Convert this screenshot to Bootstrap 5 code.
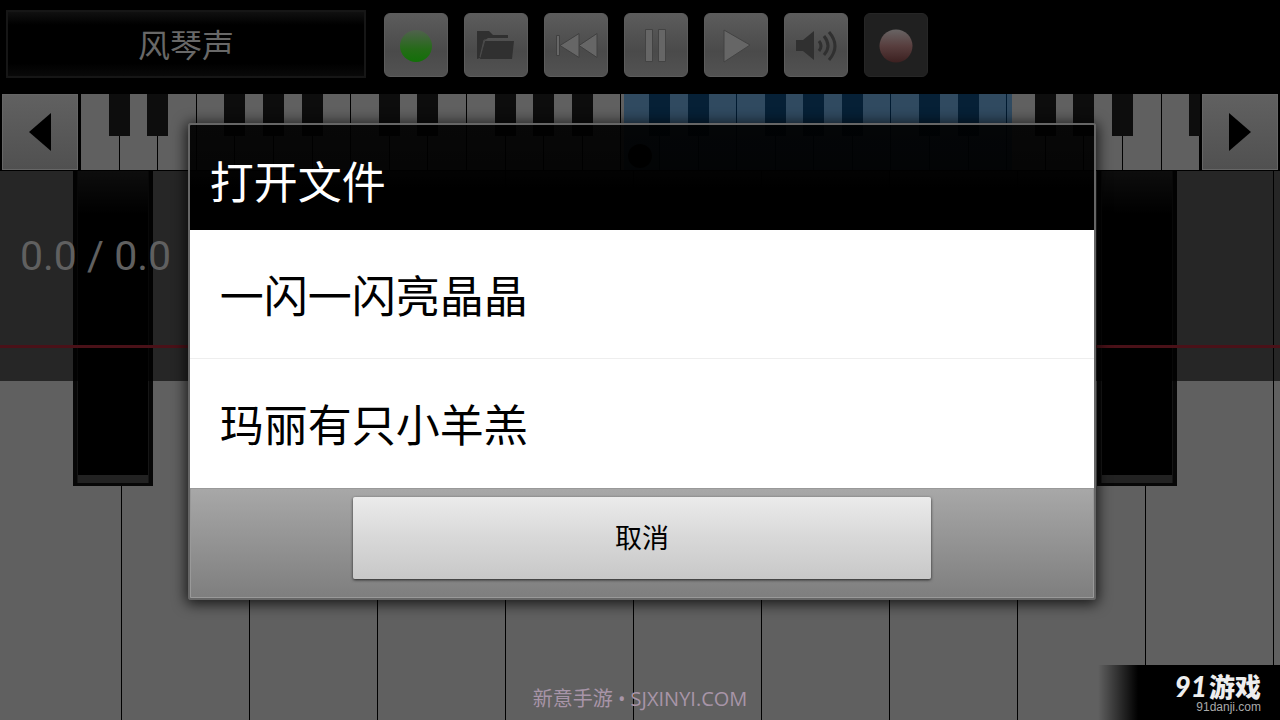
<!DOCTYPE html>
<html lang="zh-CN">
<head>
<meta charset="utf-8">
<meta name="viewport" content="width=device-width, initial-scale=1">
<title>打开文件</title>
<link href="https://cdn.jsdelivr.net/npm/bootstrap@5.3.0/dist/css/bootstrap.min.css" rel="stylesheet">
<style>
body { background: #000; font-family: Roboto, "Noto Sans CJK SC", sans-serif; }
.app { min-height: 100vh; }
.topbar { height: 94px; padding: 10px 6px 16px; }
.instrument { width: 360px; height: 68px; margin-right: 18px; padding: 4px 0 0; border: 2px solid #161616; border-radius: 0; color: #686868; font-size: 32px; background: linear-gradient(#101010, #000 20%, #000 80%, #090909); }
.tools { padding-top: 3px; }
.tool { width: 64px; height: 64px; padding: 0; border: 1px solid #5c5c5c; border-radius: 6px; background: linear-gradient(#5c5c5c, #4a4a4a 60%, #525252); }
.tool.armed { background: #202020; border-color: #262626; }
.tool svg { width: 62px; height: 62px; display: block; }
.map-row { height: 77px; }
.arrow { width: 80px; padding: 0; border: 2px solid #000; border-width: 0 2px 1px; border-radius: 0; background: linear-gradient(#616161, #505050); box-shadow: inset 0 0 0 1px #666; }
.arrow svg { width: 22px; height: 40px; }
.map { background: #606060; border: 1px solid #000; border-width: 0 0 1px 1px; }
.map-key { flex: 1 1 0; border-right: 1px solid #000; }
.map-key.sharp::after { content: ""; position: absolute; z-index: 1; top: 0; right: -11px; width: 21px; height: 42px; background: #0d0d0d; }
.map-range { z-index: 2; top: 0; bottom: 0; left: 48.5%; width: 34.7%; background: rgba(0, 52, 96, .5); }
.map-dot { z-index: 3; left: 50%; top: 50px; width: 24px; height: 24px; margin-left: -13px; background: #000; }
.piano { background: #606060; }
.big-key { flex: 0 0 10%; border-right: 1px solid #000; }
.big-key.opening { flex-basis: 9.55%; }
.big-key.sharp::after { content: ""; position: absolute; z-index: 1; top: 0; right: -32px; width: 80px; height: 315px; border: 4px solid #070707; border-top: 0; border-bottom-width: 3px; background: linear-gradient(#222, #000 45px, #000 304px, #222 304px); box-shadow: inset 1px 0 #161616, inset -1px 0 #161616; }
.roll { z-index: 2; top: 0; height: 210px; background: rgba(0, 0, 0, .6); }
.roll-line { top: 174px; height: 3px; background: #4a1118; }
.clock { color: #606060; font-size: 41px; line-height: 48px; padding: 61px 20px 0; }
.veil { z-index: 10; padding: 2px 0 0 4px; }
.dialog { width: 71.2%; border: 2px solid #666; border-radius: 3px; box-shadow: 0 2px 14px 2px rgba(0, 0, 0, .75); }
.dialog-title { height: 105px; padding: 14px 20px 0; background: linear-gradient(rgba(0, 0, 0, .92), rgba(0, 0, 0, .94) 45%, #000 60%); color: #fff; font-size: 44px; font-weight: 400; }
.song { height: 129px; padding: 8px 30px 0; border: 0; border-bottom: 1px solid #eee; color: #000; font-size: 44px; line-height: 48px; background: #fff; }
.song:last-child { border-bottom: 0; }
.dialog-foot { height: 110px; padding: 9px 0 19px; background: linear-gradient(#a8a8a8, #7e7e7e); box-shadow: inset 0 0 0 1px #999; }
.cancel { width: 64%; padding: 4px 0 0; border: 0; border-radius: 2px; font-size: 27px; color: #000; background: linear-gradient(#ebebeb, #d8d8d8 50%, #c8c8c8); box-shadow: 0 1px 3px rgba(0, 0, 0, .75); }
.cancel:hover { background: #ddd; }
.credit { z-index: 11; bottom: 6px; color: #a895a8; font: 20px/30px "Open Sans", "Noto Sans CJK SC", sans-serif; }
.brand { z-index: 11; width: 182px; height: 55px; padding: 7px 19px 0 0; background: linear-gradient(90deg, transparent, #000 22%); color: #eee; }
.brand-name { font: 900 26px/28px "Noto Sans CJK SC", sans-serif; }
.brand-num { font: italic 900 28px/28px Lato, sans-serif; margin-right: 2px; }
.brand-site { color: #aaa; font: 12px/14px "Liberation Sans", sans-serif; }
</style>
</head>
<body>
<div class="app d-flex flex-column position-relative overflow-hidden">
  <header class="topbar d-flex align-items-start">
    <button class="btn instrument" type="button">风琴声</button>
    <div class="tools d-flex gap-3">
      <button class="btn tool" type="button" aria-label="状态"><svg viewBox="0 0 62 62"><defs><linearGradient id="gr" x2="0" y2="1"><stop stop-color="#50614d"/><stop offset=".6" stop-color="#256b18"/><stop offset="1" stop-color="#127008"/></linearGradient></defs><circle cx="31" cy="32" r="16" fill="url(#gr)"/></svg></button>
      <button class="btn tool" type="button" aria-label="打开"><svg viewBox="0 0 62 62"><path d="M12 45V17h12l4 4h15v3H23l-4 3-4 17z" fill="#303030"/><path d="M20 27h29l-2 18H15z" fill="#303030"/><path d="M15 43l4-17h3" stroke="#4c4c4c" fill="none"/></svg></button>
      <button class="btn tool" type="button" aria-label="倒回"><svg viewBox="0 0 62 62"><g fill="#666" stroke="#404040"><path d="M11.500 21.500h3v20h-3z"/><path d="M15 31.500l19-12v24zM34 31.500l18-12v24z"/></g></svg></button>
      <button class="btn tool" type="button" aria-label="暂停"><svg viewBox="0 0 62 62"><g fill="#666" stroke="#434343"><path d="M20.500 15.500h7v32h-7zM33.500 15.500h7v32h-7z"/></g></svg></button>
      <button class="btn tool" type="button" aria-label="播放"><svg viewBox="0 0 62 62"><path d="M19 16l26 15-26 17z" fill="#666" stroke="#434343"/></svg></button>
      <button class="btn tool" type="button" aria-label="音量"><svg viewBox="0 0 62 62"><path d="M11 26h7l11-9v29l-11-9h-7z" fill="#303030"/><path d="M34 27q4 5 0 10M39 22q8 10 0 19M44 18q12 14 0 28" fill="none" stroke="#303030" stroke-width="3"/></svg></button>
      <button class="btn tool armed" type="button" aria-label="录音"><svg viewBox="0 0 62 62"><defs><linearGradient id="rd" x2="0" y2="1"><stop stop-color="#686464"/><stop offset=".5" stop-color="#583e3e"/><stop offset="1" stop-color="#3c2020"/></linearGradient></defs><circle cx="31" cy="32" r="16.500" fill="url(#rd)"/></svg></button>
    </div>
  </header>

  <div class="map-row d-flex">
    <button class="btn arrow" type="button" aria-label="向左"><svg viewBox="0 0 22 40"><path d="M22 1v38L0 20z"/></svg></button>
    <div class="map flex-fill d-flex position-relative overflow-hidden" id="map">
      <div class="map-range position-absolute"></div>
      <div class="map-dot position-absolute rounded-circle"></div>
    </div>
    <button class="btn arrow" type="button" aria-label="向右"><svg viewBox="0 0 22 40"><path d="M0 1v38l22-19z"/></svg></button>
  </div>

  <main class="piano flex-fill d-flex position-relative overflow-hidden" id="piano">
    <div class="roll position-absolute start-0 end-0">
      <div class="clock">0.0 / 0.0</div>
      <div class="roll-line position-absolute start-0 end-0"></div>
    </div>
  </main>

  <div class="veil position-absolute top-0 bottom-0 start-0 end-0 d-flex align-items-center justify-content-center">
    <section class="dialog overflow-hidden" role="dialog" aria-labelledby="dialogTitle">
      <h1 class="dialog-title d-flex align-items-center m-0" id="dialogTitle">打开文件</h1>
      <div class="list-group list-group-flush">
        <button type="button" class="song list-group-item list-group-item-action">一闪一闪亮晶晶</button>
        <button type="button" class="song list-group-item list-group-item-action">玛丽有只小羊羔</button>
      </div>
      <div class="dialog-foot d-flex justify-content-center">
        <button type="button" class="btn cancel">取消</button>
      </div>
    </section>
  </div>

  <div class="credit position-absolute start-0 end-0 text-center">新意手游 • SJXINYI.COM</div>
  <div class="brand position-absolute bottom-0 end-0 text-end">
    <div class="brand-name text-nowrap"><span class="brand-num">91</span>游戏</div>
    <div class="brand-site">91danji.com</div>
  </div>
</div>
<script src="https://cdn.jsdelivr.net/npm/bootstrap@5.3.0/dist/js/bootstrap.bundle.min.js"></script>
<script>
function addKeys(id, count, kind, isSharp) {
  const host = document.getElementById(id);
  for (let i = 1; i <= count; i++) {
    const key = document.createElement('div');
    key.className = kind + ' position-relative' + (isSharp(i) ? ' sharp' : '');
    if (i === 1) key.classList.add('opening');
    host.append(key);
  }
}
addKeys('map', 29, 'map-key', i => ![3, 0].includes(i % 7));
addKeys('piano', 11, 'big-key', i => i === 1 || i === 9);
</script>
</body>
</html>
